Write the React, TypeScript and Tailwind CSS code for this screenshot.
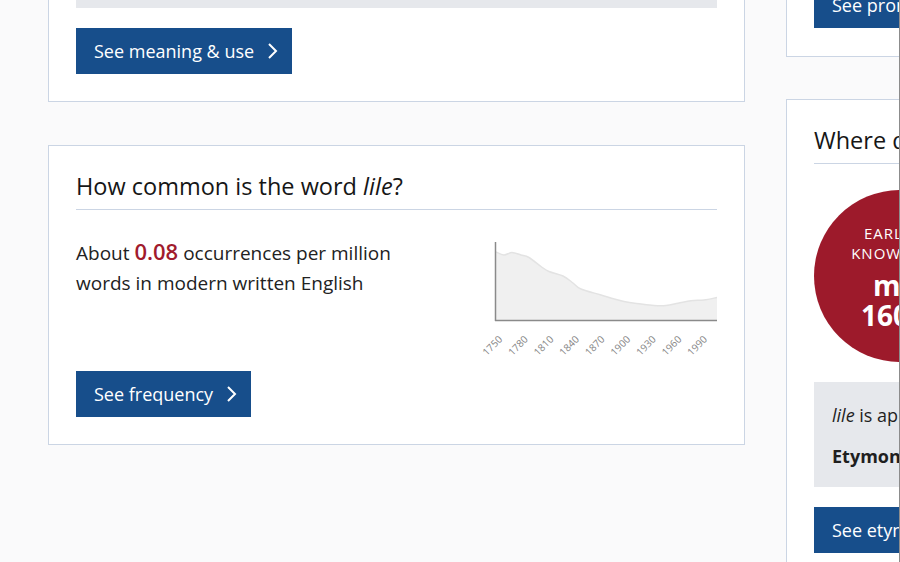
import React from "react";

const pts: [number, number][] = [
  [495, 252], [503, 255], [511, 252.5], [520, 255], [528, 257.5], [540, 266.5],
  [548, 271.5], [562, 276], [572, 283], [580, 289], [600, 295], [623, 301.5],
  [640, 304], [653, 305.5], [665, 305.5], [677, 303.3], [690, 300.7], [703, 300], [716, 297.5],
];

function smoothPath(p: [number, number][]) {
  let d = `M${p[0][0]},${p[0][1]}`;
  for (let i = 0; i < p.length - 1; i++) {
    const p0 = p[i - 1] || p[i];
    const p1 = p[i];
    const p2 = p[i + 1];
    const p3 = p[i + 2] || p2;
    const c1x = p1[0] + (p2[0] - p0[0]) / 6;
    const c1y = p1[1] + (p2[1] - p0[1]) / 6;
    const c2x = p2[0] - (p3[0] - p1[0]) / 6;
    const c2y = p2[1] - (p3[1] - p1[1]) / 6;
    d += ` C${c1x.toFixed(1)},${c1y.toFixed(1)} ${c2x.toFixed(1)},${c2y.toFixed(1)} ${p2[0]},${p2[1]}`;
  }
  return d;
}

const years = [1750, 1780, 1810, 1840, 1870, 1900, 1930, 1960, 1990];

function Chart() {
  const line = smoothPath(pts);
  const area = `${line} L716,320 L495,320 Z`;
  return (
    <svg
      width={240}
      height={120}
      viewBox="476 240 240 120"
      className="ml-auto mt-[4px] shrink-0"
    >
      <path d={area} fill="#f0f0f0" />
      <path d={line} fill="none" stroke="#e3e3e3" strokeWidth={1.5} />
      <line x1={494.5} y1={242} x2={494.5} y2={321} stroke="#8a8a8a" strokeWidth={1.5} />
      <line x1={494} y1={320.5} x2={716} y2={320.5} stroke="#8a8a8a" strokeWidth={1.5} />
      {years.map((y, i) => {
        const x = 502 + i * 25.6;
        const yy = 340;
        return (
          <text
            key={y}
            x={x}
            y={yy}
            transform={`rotate(-45 ${x} ${yy})`}
            textAnchor="end"
            fontSize={10}
            fill="#858585"
            fontFamily="'Open Sans', sans-serif"
          >
            {y}
          </text>
        );
      })}
    </svg>
  );
}

function Chevron() {
  return (
    <svg width={11} height={18} viewBox="0 0 11 18" className="shrink-0">
      <path d="M2 2 L9 9 L2 16" fill="none" stroke="#ffffff" strokeWidth={2} />
    </svg>
  );
}

function Button({ label }: { label: string }) {
  return (
    <div className="inline-flex h-[46px] items-center gap-[13px] bg-[#174e8b] pl-[18px] pr-[14px] text-[18px] text-white whitespace-nowrap">
      <span>{label}</span>
      <Chevron />
    </div>
  );
}

export default function App() {
  return (
    <div
      className="flex h-[562px] w-[900px] overflow-hidden border-r border-r-[#8c8c8c] bg-[#fafafb] pl-[48px] text-[#1f1f1f]"
      style={{ fontFamily: "'Open Sans', 'Liberation Sans', sans-serif" }}
    >
      {/* Left column */}
      <div className="flex w-[697px] shrink-0 flex-col">
        <div className="-mt-[81px] flex flex-col items-start border border-[#cbd5e4] bg-white px-[27px] pt-[28px] pb-[27px]">
          <div className="h-[60px] w-full bg-[#e6e8ec]" />
          <div className="mt-[20px]">
            <Button label="See meaning & use" />
          </div>
        </div>

        <div className="mt-[43px] flex flex-col items-start border border-[#cbd5e4] bg-white px-[27px] pt-[26px] pb-[27px]">
          <h2 className="w-full border-b border-b-[#cbd5e4] pb-[9px] text-[23.5px] font-medium leading-[28px] text-[#161616]">
            How common is the word <i>lile</i>?
          </h2>
          <div className="mt-[26px] flex w-full items-start">
            <p className="w-[345px] text-[19px] leading-[30px] text-[#222222]">
              About{" "}
              <span className="text-[22px] font-semibold text-[#a11b2d]">0.08</span>{" "}
              occurrences per million words in modern written English
            </p>
            <Chart />
          </div>
          <div className="mt-[11px]">
            <Button label="See frequency" />
          </div>
        </div>
      </div>

      {/* Right column */}
      <div className="ml-[41px] flex w-[660px] shrink-0 flex-col">
        <div className="-mt-[47px] flex flex-col items-start border border-[#cbd5e4] bg-white px-[27px] pt-[28px] pb-[28px]">
          <Button label="See pronunciation" />
        </div>

        <div className="mt-[42px] flex flex-col items-start border border-[#cbd5e4] bg-white px-[27px] pt-[26px] pb-[27px]">
          <h2 className="w-full whitespace-nowrap border-b border-b-[#cbd5e4] pb-[9px] text-[23.5px] font-medium leading-[28px] text-[#161616]">
            Where does the word <i>lile</i> come from?
          </h2>
          <div className="mt-[26px] flex h-[172px] w-[172px] flex-col items-center justify-center rounded-full bg-[#9d1a2b] text-center text-white">
            <div className="text-[15px] uppercase leading-[20px] tracking-[1px]">
              Earliest
              <br />
              known use
            </div>
            <div className="mt-[7px] text-[28px] font-bold leading-[30px]">
              mid
              <br />
              1600s
            </div>
          </div>
          <div className="mt-[20px] w-full bg-[#e6e8ec] px-[18px] pt-[18px] pb-[16px] text-[18px] leading-[30px] whitespace-nowrap text-[#1f1f1f]">
            <p>
              <i>lile</i> is apparently a borrowing from early Scandinavian.
            </p>
            <p className="mt-[11px] font-bold">Etymon: Old Norse lítill</p>
          </div>
          <div className="mt-[20px]">
            <Button label="See etymology" />
          </div>
        </div>
      </div>
    </div>
  );
}
